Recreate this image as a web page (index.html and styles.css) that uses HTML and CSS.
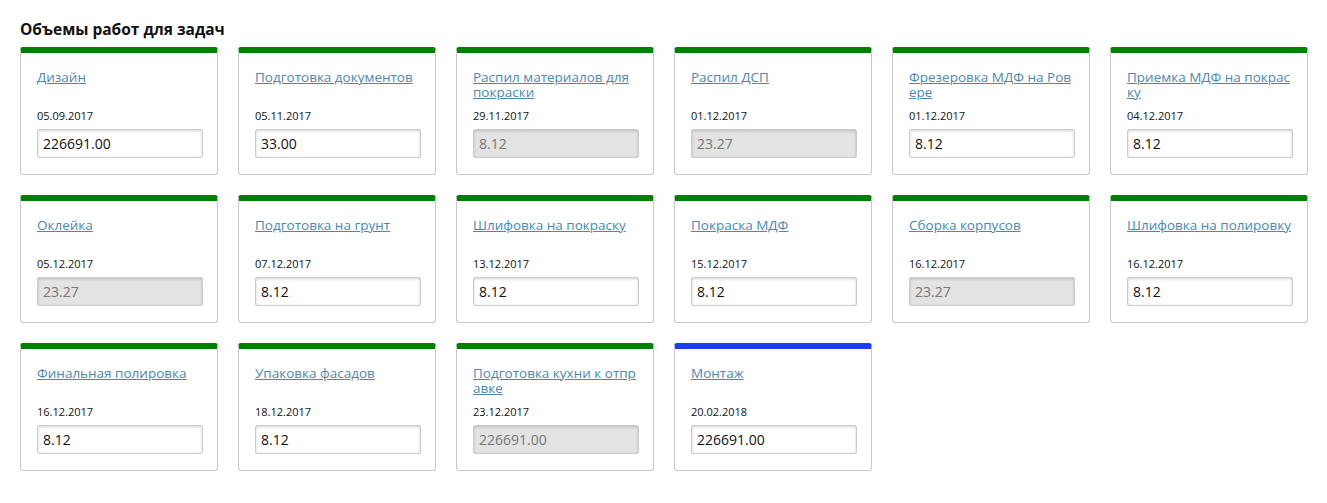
FILE: index.html
```html
<!DOCTYPE html>
<html lang="ru">
<head>
    <meta charset="UTF-8">
    <meta name="viewport" content="width=device-width, initial-scale=1.0">
    <title>Объемы работ для задач</title>
    <link rel="stylesheet" href="styles.css">
</head>
<body>
    <div class="container">
        <h2 class="page-title">Объемы работ для задач</h2>

        <div class="task-list">
            <div class="task-card">
                <div class="task-name"><a href="#">Дизайн</a></div>
                <div class="task-date">05.09.2017</div>
                <input class="task-input" type="text" value="226691.00">
            </div>
            <div class="task-card">
                <div class="task-name"><a href="#">Подготовка документов</a></div>
                <div class="task-date">05.11.2017</div>
                <input class="task-input" type="text" value="33.00">
            </div>
            <div class="task-card">
                <div class="task-name"><a href="#">Распил материалов для покраски</a></div>
                <div class="task-date">29.11.2017</div>
                <input class="task-input" type="text" value="8.12" disabled>
            </div>
            <div class="task-card">
                <div class="task-name"><a href="#">Распил ДСП</a></div>
                <div class="task-date">01.12.2017</div>
                <input class="task-input" type="text" value="23.27" disabled>
            </div>
            <div class="task-card">
                <div class="task-name"><a href="#">Фрезеровка МДФ на Ров<br>ере</a></div>
                <div class="task-date">01.12.2017</div>
                <input class="task-input" type="text" value="8.12">
            </div>
            <div class="task-card">
                <div class="task-name"><a href="#">Приемка МДФ на покрас<br>ку</a></div>
                <div class="task-date">04.12.2017</div>
                <input class="task-input" type="text" value="8.12">
            </div>

            <div class="task-card">
                <div class="task-name"><a href="#">Оклейка</a></div>
                <div class="task-date">05.12.2017</div>
                <input class="task-input" type="text" value="23.27" disabled>
            </div>
            <div class="task-card">
                <div class="task-name"><a href="#">Подготовка на грунт</a></div>
                <div class="task-date">07.12.2017</div>
                <input class="task-input" type="text" value="8.12">
            </div>
            <div class="task-card">
                <div class="task-name"><a href="#">Шлифовка на покраску</a></div>
                <div class="task-date">13.12.2017</div>
                <input class="task-input" type="text" value="8.12">
            </div>
            <div class="task-card">
                <div class="task-name"><a href="#">Покраска МДФ</a></div>
                <div class="task-date">15.12.2017</div>
                <input class="task-input" type="text" value="8.12">
            </div>
            <div class="task-card">
                <div class="task-name"><a href="#">Сборка корпусов</a></div>
                <div class="task-date">16.12.2017</div>
                <input class="task-input" type="text" value="23.27" disabled>
            </div>
            <div class="task-card">
                <div class="task-name"><a href="#">Шлифовка на полировку</a></div>
                <div class="task-date">16.12.2017</div>
                <input class="task-input" type="text" value="8.12">
            </div>

            <div class="task-card">
                <div class="task-name"><a href="#">Финальная полировка</a></div>
                <div class="task-date">16.12.2017</div>
                <input class="task-input" type="text" value="8.12">
            </div>
            <div class="task-card">
                <div class="task-name"><a href="#">Упаковка фасадов</a></div>
                <div class="task-date">18.12.2017</div>
                <input class="task-input" type="text" value="8.12">
            </div>
            <div class="task-card">
                <div class="task-name"><a href="#">Подготовка кухни к отпр<br>авке</a></div>
                <div class="task-date">23.12.2017</div>
                <input class="task-input" type="text" value="226691.00" disabled>
            </div>
            <div class="task-card current">
                <div class="task-name"><a href="#">Монтаж</a></div>
                <div class="task-date">20.02.2018</div>
                <input class="task-input" type="text" value="226691.00">
            </div>
        </div>
    </div>
</body>
</html>
```

FILE: styles.css
```css
body {
    margin: 0;
    padding: 0;
    background: #fff;
    font-family: "Open Sans", "Noto Sans", sans-serif;
    color: #111;
}
.container {
    padding: 18px 20px 16px;
}
.page-title {
    margin: 0 0 7px 0;
    font-size: 15.5px;
    line-height: 22px;
    font-weight: bold;
    color: #111;
}
.task-list {
    display: flex;
    flex-wrap: wrap;
    gap: 20px;
    width: 1308px;
}
.task-card {
    box-sizing: border-box;
    width: 198px;
    height: 128px;
    padding: 17px 15px 0 16px;
    border: 1px solid #c9c9c9;
    border-top: 6px solid #008000;
    border-radius: 3px;
}
.task-card.current {
    border-top-color: #1a3ff2;
}
.task-name {
    height: 30px;
    font-size: 13.5px;
    line-height: 15px;
}
.task-name a {
    color: #4a88b2;
    text-decoration: underline;
}
.task-date {
    margin-top: 8px;
    font-size: 11px;
    line-height: 15px;
    color: #111;
}
.task-input {
    display: block;
    box-sizing: border-box;
    width: 166px;
    height: 29px;
    margin-top: 6px;
    padding: 0 5px;
    border: 1px solid #cdcdcd;
    border-radius: 2px;
    box-shadow: inset 0 1px 3px rgba(0,0,0,0.18);
    background: #fff;
    font-family: "Open Sans", "Noto Sans", sans-serif;
    font-size: 14px;
    color: #111;
}
.task-input:disabled {
    background: #e3e3e3;
    color: #777;
}
```
